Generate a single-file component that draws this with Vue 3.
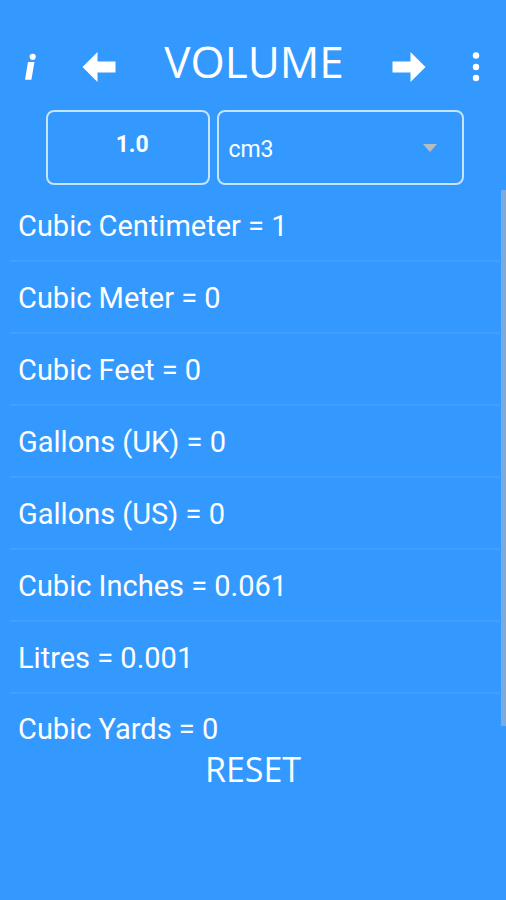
<script setup>
import { ref, computed } from 'vue'

const units = [
  { key: 'cm3', name: 'Cubic Centimeter', factor: 1 },
  { key: 'm3', name: 'Cubic Meter', factor: 0.000001 },
  { key: 'ft3', name: 'Cubic Feet', factor: 0.0000353147 },
  { key: 'gal (UK)', name: 'Gallons (UK)', factor: 0.000219969 },
  { key: 'gal (US)', name: 'Gallons (US)', factor: 0.000264172 },
  { key: 'in3', name: 'Cubic Inches', factor: 0.0610237 },
  { key: 'l', name: 'Litres', factor: 0.001 },
  { key: 'yd3', name: 'Cubic Yards', factor: 0.00000130795 },
]

const amount = ref('1.0')
const unit = ref('cm3')

const rows = computed(() => {
  const from = units.find((u) => u.key === unit.value)
  const base = (parseFloat(amount.value) || 0) / from.factor
  return units.map((u) => ({
    name: u.name,
    value: Math.round(base * u.factor * 1000) / 1000,
  }))
})

function reset() {
  amount.value = '1.0'
  unit.value = 'cm3'
}
</script>

<template>
  <div class="screen">
    <header class="bar">
      <button class="icon" type="button" aria-label="Information">
        <svg width="12" height="28" viewBox="0 0 12 28">
          <circle cx="8.7" cy="3.8" r="3.1" />
          <path d="M4 9H10.4L7.4 26.8H1Z" />
        </svg>
      </button>
      <button class="icon" type="button" aria-label="Previous">
        <svg width="34" height="32" viewBox="0 0 34 32">
          <path d="M0.5 16L15.5 1V10.5H33.5V21.5H15.5V31Z" />
        </svg>
      </button>
      <h1 class="title">VOLUME</h1>
      <button class="icon" type="button" aria-label="Next">
        <svg width="34" height="32" viewBox="0 0 34 32">
          <path d="M33.5 16L18.5 1V10.5H0.5V21.5H18.5V31Z" />
        </svg>
      </button>
      <button class="icon" type="button" aria-label="More options">
        <svg width="8" height="32" viewBox="0 0 8 32">
          <circle cx="4" cy="4.5" r="3.2" />
          <circle cx="4" cy="16" r="3.2" />
          <circle cx="4" cy="27" r="3.2" />
        </svg>
      </button>
    </header>

    <div class="entry">
      <input v-model="amount" class="box amount" type="text" inputmode="decimal" aria-label="Amount" />
      <div class="picker">
        <select v-model="unit" class="box unit" aria-label="Unit">
          <option v-for="u in units" :key="u.key" :value="u.key">{{ u.key }}</option>
        </select>
        <svg class="caret" width="14" height="8" viewBox="0 0 14 8">
          <path d="M0 0H14L7 8Z" />
        </svg>
      </div>
    </div>

    <div class="results">
      <ul class="list">
        <li v-for="row in rows" :key="row.name" class="row">{{ row.name }} = {{ row.value }}</li>
      </ul>
      <span class="thumb"></span>
    </div>

    <button class="reset" type="button" @click="reset">RESET</button>
  </div>
</template>

<style>
body {
  margin: 0;
  background: #3399ff;
}
</style>

<style scoped>
.screen {
  min-height: 100vh;
  box-sizing: border-box;
  padding-top: 32px;
  display: flex;
  flex-direction: column;
  background: #3399ff;
  color: #fff;
  font-family: Roboto, "Liberation Sans", sans-serif;
}
.bar {
  display: flex;
  align-items: center;
  justify-content: space-between;
  height: 70px;
  padding: 0 26px 0 24px;
}
.icon {
  display: flex;
  padding: 0;
  border: 0;
  background: none;
  cursor: pointer;
}
.icon svg {
  fill: #fff;
}
.title {
  margin: 0;
  padding: 0 3px 12px;
  font: 400 44px/60px "Open Sans", sans-serif;
}
.entry {
  display: grid;
  grid-template-columns: 2fr 3fr;
  gap: 7px;
  margin-top: 8px;
  padding: 0 42px 0 46px;
}
.box {
  box-sizing: border-box;
  width: 100%;
  height: 75px;
  border: 2px solid #c4e4ff;
  border-radius: 8px;
  background: none;
  color: #fff;
  outline: none;
}
.amount {
  min-width: 0;
  padding: 0 0 6px 8px;
  text-align: center;
  font: 700 23px/28px Roboto, sans-serif;
}
.picker {
  min-width: 0;
  display: grid;
  align-items: center;
}
.picker > * {
  grid-area: 1 / 1;
}
.unit {
  appearance: none;
  padding: 4px 40px 0 9px;
  font: 400 23px/28px Roboto, sans-serif;
}
.unit option {
  color: #222;
}
.caret {
  justify-self: end;
  margin-right: 27px;
  fill: #b4bcc4;
  pointer-events: none;
}
.results {
  position: relative;
  margin-top: 5px;
}
.list {
  margin: 0;
  padding: 0 6px 0 10px;
  list-style: none;
}
.row {
  box-sizing: border-box;
  height: 72px;
  padding: 18px 8px;
  border-bottom: 2px solid #429fff;
  font-size: 29px;
  line-height: 36px;
}
.row:last-child {
  height: 54px;
  padding-top: 17px;
  padding-bottom: 0;
  border-bottom: 0;
}
.thumb {
  position: absolute;
  top: 0;
  right: 0;
  bottom: 22px;
  width: 5px;
  background: #7aaade;
}
.reset {
  align-self: center;
  padding: 0 8px;
  border: 0;
  background: none;
  color: #fff;
  font: 400 34px/42px "Open Sans", sans-serif;
  cursor: pointer;
}
</style>
